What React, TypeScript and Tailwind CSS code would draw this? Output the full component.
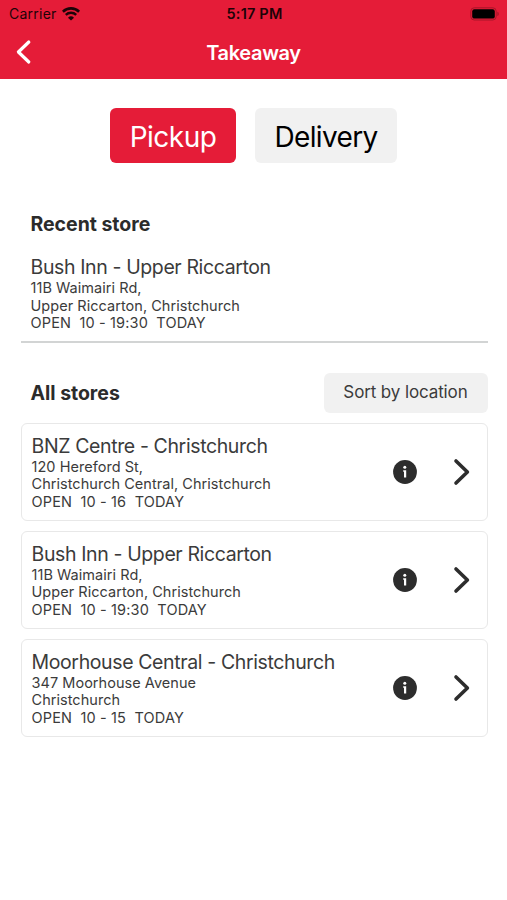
type Store = {
  name: string;
  street: string;
  area: string;
  hours: string;
};

const recentStore: Store = {
  name: 'Bush Inn - Upper Riccarton',
  street: '11B Waimairi Rd,',
  area: 'Upper Riccarton, Christchurch',
  hours: '10 - 19:30',
};

const allStores: Store[] = [
  {
    name: 'BNZ Centre - Christchurch',
    street: '120 Hereford St,',
    area: 'Christchurch Central, Christchurch',
    hours: '10 - 16',
  },
  recentStore,
  {
    name: 'Moorhouse Central - Christchurch',
    street: '347 Moorhouse Avenue',
    area: 'Christchurch',
    hours: '10 - 15',
  },
];

const WifiIcon = () => (
  <svg width="18" height="14" viewBox="0 0 18 14" fill="none" stroke="#1d0307">
    <path d="M0.9 4.7a11.6 11.6 0 0 1 16.2 0" strokeWidth="2.6" />
    <path d="M3.8 7.9a7.5 7.5 0 0 1 10.4 0" strokeWidth="2.4" />
    <path
      d="M9 13.6 6 10.8a4.3 4.3 0 0 1 6 0z"
      fill="#1d0307"
      stroke="none"
    />
  </svg>
);

const BatteryIcon = () => (
  <svg width="30" height="14" viewBox="0 0 30 14" fill="none">
    <rect x="0.8" y="0.8" width="25.4" height="12.2" rx="3.4" stroke="#a81529" />
    <rect x="2.2" y="2.2" width="22.6" height="9.4" rx="2.2" fill="#000" />
    <path d="M27.3 4.8v4.2c1-.4 1.5-1.2 1.5-2.1s-.5-1.7-1.5-2.1z" fill="#a81529" />
  </svg>
);

const InfoIcon = () => (
  <svg width="24" height="24" viewBox="0 0 24 24">
    <circle cx="12" cy="12" r="11.9" fill="#2d2d2d" />
    <circle cx="11.8" cy="7.3" r="1.5" fill="#fff" />
    <path d="M10.2 10.2h3v7.4h-2.2v-5.8h-.8z" fill="#fff" />
  </svg>
);

const ChevronIcon = () => (
  <svg
    width="18"
    height="28"
    viewBox="0 0 18 28"
    fill="none"
    stroke="#2d2d2d"
    strokeWidth="3.6"
    strokeLinecap="round"
    strokeLinejoin="round"
  >
    <path d="M3 3 14.4 14 3 25" />
  </svg>
);

const StoreDetails = ({ store }: { store: Store }) => (
  <div className="text-[#3b3b3b]">
    <h3 className="pt-px text-[19.5px] leading-6 tracking-[-0.38px]">
      {store.name}
    </h3>
    <div className="text-[14.5px] leading-[17.5px] tracking-[0.04px]">
      <p>{store.street}</p>
      <p>{store.area}</p>
      <p className="whitespace-pre tracking-[0.14px]">
        {`OPEN  ${store.hours}  TODAY`}
      </p>
    </div>
  </div>
);

const StoreCard = ({ store }: { store: Store }) => (
  <li className="flex h-[98px] items-center justify-between rounded-md border-[1.5px] border-[#e8e8e8] pl-2.5 pr-4">
    <StoreDetails store={store} />
    <div className="flex items-center gap-9">
      <button aria-label="Store info">
        <InfoIcon />
      </button>
      <button aria-label="Select store">
        <ChevronIcon />
      </button>
    </div>
  </li>
);

const Header = () => (
  <header className="h-[79px] bg-[#e51c38]">
    <div className="grid h-[27px] grid-cols-3 items-center pl-[9px] pr-[7px] text-[14px] text-[#1d0307]">
      <div className="flex items-center gap-[5px]">
        <span className="tracking-[0.25px]">Carrier</span>
        <WifiIcon />
      </div>
      <span className="pt-px text-center text-[14.5px] font-semibold tracking-[0.2px]">
        5:17 PM
      </span>
      <div className="flex justify-end">
        <BatteryIcon />
      </div>
    </div>
    <div className="grid h-[52px] grid-cols-3 items-center px-4 text-white">
      <button aria-label="Back" className="justify-self-start pb-[3px]">
        <svg
          width="16"
          height="26"
          viewBox="0 0 16 26"
          fill="none"
          stroke="currentColor"
          strokeWidth="3.2"
          strokeLinecap="round"
          strokeLinejoin="round"
        >
          <path d="M12.8 3 2.4 13l10.4 10" />
        </svg>
      </button>
      <h1 className="text-center text-[20px] font-semibold tracking-[-0.35px]">
        Takeaway
      </h1>
    </div>
  </header>
);

const App = () => {
  return (
    <div className="min-h-[900px] w-full bg-white font-['Inter','Liberation_Sans',sans-serif]">
      <Header />
      <main className="pl-[20.5px] pr-[19.5px]">
        <div className="flex justify-center gap-[19px] pr-px pt-[29px]">
          <button className="h-[55px] w-[126px] rounded-md bg-[#e51c38] pt-[3px] text-[28px] tracking-[-0.5px] text-white">
            Pickup
          </button>
          <button className="h-[55px] w-[142px] rounded-md bg-[#f1f1f1] pt-[3px] text-[28px] tracking-[-0.65px] text-black">
            Delivery
          </button>
        </div>

        <section className="mt-[49px] border-b-2 border-[#d2d4d4] pb-[9px] pl-2.5">
          <h2 className="text-[19.5px] font-bold leading-6 tracking-[-0.03px] text-[#2b2b2b]">
            Recent store
          </h2>
          <div className="mt-[18px]">
            <StoreDetails store={recentStore} />
          </div>
        </section>

        <section className="mt-[30px]">
          <div className="flex items-center justify-between pl-2.5">
            <h2 className="pt-[3px] text-[19.5px] font-bold tracking-[-0.03px] text-[#2b2b2b]">
              All stores
            </h2>
            <button className="h-10 w-[164px] rounded-md bg-[#f1f1f1] pt-px text-[17px] tracking-[-0.12px] text-[#3b3b3b]">
              Sort by location
            </button>
          </div>
          <ul className="mt-2.5 flex flex-col gap-2.5">
            {allStores.map((store) => (
              <StoreCard key={store.name} store={store} />
            ))}
          </ul>
        </section>
      </main>
    </div>
  );
};

export default App;
